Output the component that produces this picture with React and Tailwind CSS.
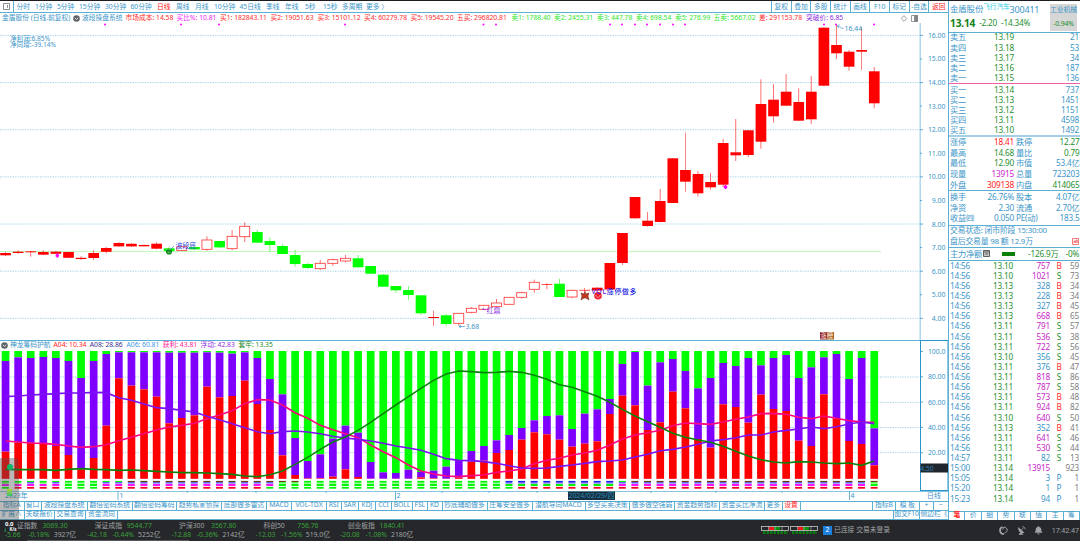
import React from 'react';

const STEP = 12.59;
const barX = (i) => 5.5 + i * STEP;

// kind, high, top, bottom, low (r = solid red, h = hollow red, g = green)
const candles = [
  ['r', 252, 253, 255.3, 256], ['r', 250.3, 251.7, 253, 253.7], ['r', 251, 251.3, 252, 256.7],
  ['r', 250, 252, 254.7, 255], ['r', 250.7, 251.7, 253.8, 254], ['r', 252, 252, 257.8, 258],
  ['r', 256.3, 257.8, 259, 260], ['r', 250, 253, 258, 260], ['r', 247, 248, 251.8, 253.3],
  ['r', 242.3, 243, 246.4, 246.7], ['r', 243, 243.8, 246.4, 247], ['r', 244.5, 245, 246.3, 246.5],
  ['r', 242.3, 243.7, 248.7, 249.3], ['g', 247, 248.3, 251, 252], ['h', 246, 246.7, 250.6, 251],
  ['g', 246.3, 247, 249.4, 250], ['h', 236.3, 240, 249.3, 250.7], ['g', 241, 241, 247.4, 248],
  ['h', 230, 236.3, 248.7, 250.3], ['h', 222.3, 226.3, 236.7, 242], ['g', 230, 232, 242.7, 243],
  ['g', 237.3, 241, 245, 252], ['g', 244, 246, 254, 254], ['g', 250, 255, 264, 266.7],
  ['g', 263, 264, 268, 269], ['h', 260, 263.3, 268.7, 270], ['h', 258.7, 259.7, 263.3, 266],
  ['h', 255, 258.3, 261, 262.3], ['g', 255, 258.3, 267.3, 267.5], ['g', 266, 266, 273.7, 274],
  ['g', 273.7, 274.7, 286.7, 287], ['g', 286, 286, 290.3, 292.7], ['g', 286, 290, 295, 300],
  ['g', 295, 295.3, 313.3, 314.7], ['r', 310.7, 317, 318, 326], ['g', 314, 315.3, 324, 325.7],
  ['h', 313, 313.3, 323.3, 325.7], ['h', 307, 308.3, 312.3, 313.3], ['h', 305, 305.3, 309.3, 310],
  ['h', 299, 303, 306.7, 307.5], ['h', 297, 297.3, 304.3, 305], ['h', 291.7, 292.7, 297.3, 298.7],
  ['h', 279.7, 282.3, 289.3, 292.7], ['h', 283, 284, 285, 289.3], ['g', 278.7, 283.7, 297, 297],
  ['h', 289.7, 290.3, 297, 298.3], ['h', 288, 289.8, 290.8, 293], ['r', 287, 287.7, 290.5, 291],
  ['r', 263, 263, 289.5, 290], ['r', 233, 233, 263, 265], ['r', 197, 197, 218.3, 218.5],
  ['r', 212, 220.7, 226, 226.7], ['r', 189, 201, 222, 222.3], ['r', 158, 158.3, 203, 203],
  ['r', 132.7, 170, 181.7, 191.7], ['r', 171, 174, 193.3, 196.7], ['r', 173, 182, 187.3, 189.7],
  ['r', 139, 143, 184.7, 187], ['r', 119, 152.3, 155.3, 161], ['r', 130, 130.3, 155, 157],
  ['r', 79.3, 104, 141.7, 148.7], ['r', 84.3, 99.7, 116.3, 122.7], ['r', 74, 91.7, 105.7, 106],
  ['r', 88.3, 102, 120.7, 121], ['r', 76, 91.7, 119.3, 124], ['r', 27, 27.7, 85.7, 86],
  ['r', 25, 45, 53.3, 59], ['r', 50, 51.7, 66.7, 70.7], ['r', 27.7, 50, 51.7, 70],
  ['r', 67, 71.3, 103.3, 108.3],
];

// lower pane series are stored in thirds of a pixel from the pane top
const paneY = (v) => v / 3;
const purpleTop = [
  78, 67, 69, 66, 69, 78, 129, 78, 57, 52, 52, 52, 52, 53, 53, 53, 52, 53, 56, 52, 69, 132, 178, 309, 378, 358, 311,
  272, 293, 381, 412, 414, 404, 411, 407, 395, 375, 348, 333, 316, 300, 279, 256, 243, 241, 282, 236, 223, 192, 87,
  51, 152, 82, 72, 108, 160, 129, 84, 93, 69, 91, 69, 60, 129, 97, 67, 57, 132, 69, 280,
];
const redTop = [
  350, 323, 323, 325, 333, 360, 403, 369, 272, 130, 152, 163, 185, 265, 249, 241, 155, 187, 183, 137, 207, 285, 361,
  420, 430, 430, 425, 403, 426, 431, 431, 431, 431, 427, 430, 431, 428, 380, 377, 354, 345, 314, 292, 298, 314, 335,
  326, 319, 237, 182, 211, 285, 262, 170, 220, 312, 338, 208, 216, 263, 179, 222, 228, 317, 333, 178, 250, 318, 327,
  391,
];
const pinkLine = [
  318, 321, 324, 325, 328, 333, 337, 335, 329, 317, 307, 296, 285, 276, 271, 265, 251, 240, 227, 206, 194, 195, 210,
  233, 250, 271, 284, 296, 308, 330, 350, 368, 390, 408, 417, 423, 425, 422, 420, 412, 408, 402, 386, 376, 370, 360,
  354, 346, 330, 312, 300, 293, 286, 272, 264, 266, 268, 261, 253, 246, 236, 235, 238, 247, 251, 243, 250, 257, 261,
  262,
];
const purpleLine = [
  185, 183, 180, 178, 176, 174, 174, 172, 173, 188, 196, 207, 218, 221, 226, 231, 244, 254, 266, 278, 290, 296, 290,
  288, 291, 296, 304, 309, 313, 318, 325, 333, 339, 346, 358, 371, 376, 377, 380, 385, 392, 399, 400, 399, 394, 390,
  385, 380, 378, 375, 366, 358, 347, 343, 336, 328, 318, 314, 308, 300, 300, 291, 286, 282, 276, 281, 275, 267, 261,
  266,
];
const greenLine = [
  403, 404, 404, 404, 406, 403, 401, 403, 404, 406, 405, 407, 409, 411, 413, 413, 414, 416, 418, 423, 425, 419, 408,
  388, 367, 343, 321, 306, 286, 262, 236, 210, 185, 160, 136, 117, 108, 110, 113, 112, 109, 112, 121, 133, 149, 157,
  170, 184, 202, 223, 243, 260, 277, 295, 307, 315, 322, 334, 349, 363, 374, 381, 384, 380, 381, 384, 386, 384, 391,
  378,
];

const G = '#00f500';
const N = '#6b3d10';
const B = '#2020e8';
const M = '#ff10ff';
const R = '#f80020';
const stripeColors = (i) => {
  if (i === 0 || i === 1 || i === 3) return [G, G, M, i === 0 ? G : R];
  if (i === 2 || i === 4) return [G, B, M, R];
  if (i < 8) return [G, G, G, G];
  if (i < 10) return [G, B, M, R];
  if (i < 21) return [N, B, M, R];
  if (i === 21) return [N, B, M, G];
  if (i < 24) return [N, G, G, G];
  if (i < 40) return [G, G, G, G];
  if (i === 40) return [B, B, G, G];
  if (i < 49) return [B, B, G, R];
  if (i === 49) return [G, B, M, R];
  if (i === 69) return [N, G, G, R];
  return [N, B, M, R];
};

const periods = [
  ['分时', 'w-[18.5px]'], ['1分钟', 'w-[22px]'], ['5分钟', 'w-[22px]'], ['15分钟', 'w-[26px]'],
  ['30分钟', 'w-[25.5px]'], ['60分钟', 'w-[26.5px]'], ['日线', 'w-[19px] text-[#ff2020]'], ['周线', 'w-[19px]'],
  ['月线', 'w-[19px]'], ['10分钟', 'w-[25.5px]'], ['45日线', 'w-[26.5px]'], ['季线', 'w-[19px]'],
  ['年线', 'w-[20px]'], ['5秒', 'w-[18px]'], ['15秒', 'w-[19px]'], ['多周期', 'w-[24px]'], ['更多 〉', 'w-[22px]'],
];

const tools = ['复权', '叠加', '多股', '统计', '画线', 'F10', '标记', '-自选', '返回'];

const indicators = [
  ['市场成本: 14.58', 'w-[51px] text-[#ff2a2a]'],
  ['买比%: 10.81', 'w-[43.5px] text-[#f02af0]'],
  ['买1: 182843.11', 'w-[50.5px] text-[#ff2a2a]'],
  ['买2: 19051.63', 'w-[47px] text-[#ff2a2a]'],
  ['买3: 15101.12', 'w-[46.5px] text-[#ff2a2a]'],
  ['买4: 60279.78', 'w-[46.5px] text-[#ff2a2a]'],
  ['买5: 19545.20', 'w-[46.5px] text-[#ff2a2a]'],
  ['五买: 296820.81', 'w-[54.5px] text-[#ff2a2a]'],
  ['卖1: 1788.40', 'w-[42.5px] text-[#2de82d]'],
  ['卖2: 2455.31', 'w-[43px] text-[#2de82d]'],
  ['卖3: 447.78', 'w-[39px] text-[#2de82d]'],
  ['卖4: 698.54', 'w-[39px] text-[#2de82d]'],
  ['卖5: 276.99', 'w-[38.5px] text-[#2de82d]'],
  ['五卖: 5667.02', 'w-[45.5px] text-[#2de82d]'],
  ['差: 291153.78', 'w-[47px] text-[#ff2a2a]'],
  ['突破价: 6.85', 'w-[40px] text-[#8a2be2]'],
];

const lowerIndicators = [
  ['A04: 10.34', 'w-[36.3px] text-[#ff2020]'],
  ['A08: 28.86', 'w-[36.7px] text-[#3a2a90]'],
  ['A06: 60.81', 'w-[36.3px] text-[#3c96e8]'],
  ['获利: 43.81', 'w-[37.7px] text-[#ff2090]'],
  ['浮动: 42.83', 'w-[38px] text-[#8a2be2]'],
  ['套牢: 13.35', 'w-[38px] text-[#1f8a1f]'],
];

const sells = [['卖五', '13.19', '21'], ['卖四', '13.18', '53'], ['卖三', '13.17', '34'], ['卖二', '13.16', '187'], ['卖一', '13.15', '136']];
const buys = [['买一', '13.14', '737'], ['买二', '13.13', '1451'], ['买三', '13.12', '1151'], ['买四', '13.11', '4598'], ['买五', '13.10', '1492']];

const stats = [
  ['涨停', '18.41', 'text-[#ff2020]', '跌停', '12.27', 'text-[#1f9030]'],
  ['最高', '14.68', 'text-[#1f9030]', '量比', '0.79', 'text-[#1f9030]'],
  ['最低', '12.90', 'text-[#1f9030]', '市值', '53.4亿', ''],
  ['现量', '13915', 'text-[#c828c8]', '总量', '723203', ''],
  ['外盘', '309138', 'text-[#ff2020]', '内盘', '414065', 'text-[#1f9030]'],
];
const stats2 = [
  ['换手', '26.76%', '', '股本', '4.07亿', ''],
  ['净资', '2.30', '', '流通', '2.70亿', ''],
  ['收益㈣', '0.050', '', 'PE(动)', '183.5', ''],
];

const ticks = `14:56 13.10 757 B 59
14:56 13.10 1021 S 73
14:56 13.13 328 B 34
14:56 13.13 228 B 34
14:56 13.13 327 B 45
14:56 13.13 668 B 65
14:56 13.11 791 S 57
14:56 13.11 536 S 38
14:56 13.11 722 S 56
14:56 13.10 356 S 45
14:56 13.11 376 B 47
14:56 13.11 818 S 86
14:56 13.11 787 S 58
14:56 13.11 573 B 48
14:56 13.11 924 B 82
14:56 13.10 640 S 50
14:56 13.13 352 B 41
14:56 13.11 641 S 46
14:56 13.11 530 S 44
14:57 13.11 82 S 13
15:00 13.14 13915 - 923
15:05 13.14 3 P 1
15:20 13.14 1 P 1
15:23 13.14 94 P 1`.split('\n').map((line) => line.split(' '));

const sideColor = { B: 'text-[#ff2a2a]', S: 'text-[#1f9030]', P: 'text-[#2f8fc8]' };

const templates = [
  ['指标A', 'w-[24.5px]'], ['窗口', 'w-[17px]'], ['波段操盘系统', 'w-[46.5px]'], ['翻倍密码系统', 'w-[44.5px]'],
  ['翻倍密码筹码', 'w-[44.5px]'], ['趋势私家侦探', 'w-[45px]'], ['底部做多雷达', 'w-[45px]'], ['MACD', 'w-[25px]'],
  ['VOL-TDX', 'w-[35px]'], ['RSI', 'w-[14.5px]'], ['SAR', 'w-[17.5px]'], ['KDJ', 'w-[17px]'], ['CCI', 'w-[16px]'],
  ['BOLL', 'w-[21px]'], ['FSL', 'w-[14.5px]'], ['KD', 'w-[15px]'], ['抄底辅助做多', 'w-[45px]'],
  ['庄筹安全做多', 'w-[45px]'], ['潜航导向MACD', 'w-[53px]'], ['多空买卖决策', 'w-[44.5px]'],
  ['做多做空强弱', 'w-[45px]'], ['资金趋势指标', 'w-[45px]'], ['资金买比净流', 'w-[45px]'], ['更多', 'w-[17.5px]'],
  ['设置', 'w-[18px] text-[#ff2020]'],
];

const indices = [
  ['证指数', '3069.30', '-5.66', '-0.18%', '3927亿'],
  ['深证成指', '9544.77', '-42.18', '-0.44%', '5252亿'],
  ['沪深300', '3567.80', '-12.88', '-0.36%', '2142亿'],
  ['科创50', '756.76', '-12.03', '-1.56%', '519.0亿'],
  ['创业板指', '1840.41', '-20.08', '-1.08%', '2180亿'],
];

const toPoints = (series) => series.map((v, i) => `${barX(i)},${paneY(v)}`).join(' ');

const Candle = ({ data, index }) => {
  const [kind, high, top, bottom, low] = data;
  const x = barX(index);
  const color = kind === 'g' ? '#00ff00' : '#ff0000';
  const thin = bottom - top < 1.5;
  return (
    <g>
      <line x1={x} x2={x} y1={high} y2={low} stroke={color} strokeWidth="0.7" opacity="0.8" />
      {kind === 'h' && !thin ? (
        <rect x={x - 5} y={top} width="10" height={bottom - top} fill="#fff" stroke="#ff3030" strokeWidth="0.8" />
      ) : (
        <rect x={x - 5.3} y={top} width="10.7" height={Math.max(bottom - top, 1)} fill={color} opacity={kind === 'h' ? 0.7 : 1} />
      )}
    </g>
  );
};

const MainChart = () => (
  <svg className="block" width="948" height="317" viewBox="0 23 948 317" fontSize="6.9">
    {[16, 14, 12, 10, 8, 6, 4].map((p) => (
      <line key={p} x1="0" x2="920" y1={35.4 + (16 - p) * 23.58} y2={35.4 + (16 - p) * 23.58} stroke="#8cc6e2" strokeWidth="0.8" strokeDasharray="1.3 1.2" />
    ))}
    <line x1="0" x2="881" y1="251.6" y2="251.6" stroke="#bdf7b4" strokeWidth="1" />
    {candles.map((c, i) => <Candle key={i} data={c} index={i} />)}
    {[105, 181, 219, 345, 483.5, 496, 610, 622, 635, 647, 660, 673, 685, 824, 836, 874].map((x) => (
      <circle key={x} cx={x} cy="24.6" r="1" fill="#ff00ff" />
    ))}
    <path d="M57.3 253.5v4M55.6 255.4h3.4M725.5 185v4M723.8 187h3.4" stroke="#ff00ff" strokeWidth="2" />
    <circle cx="169" cy="251.5" r="3.1" fill="#128a22" />
    <path d="M166 249h6M167.5 252.3h3" stroke="#70e070" strokeWidth="0.8" />
    <path d="M171 249l3-3" stroke="#2f70c8" strokeWidth="0.7" />
    <text x="175.5" y="247.8" fill="#3048e0">波段底</text>
    <path d="M483 309.5h3M484 308l-2 1.5" stroke="#8a2be2" strokeWidth="0.7" />
    <text x="486.5" y="313" fill="#8a2be2">红鼎</text>
    <path d="M581 293l3 1 1-2.5 1 2.5 3-1-1 3 1 4-3-2h-2l-3 2 1-4z" fill="#c03820" stroke="#602010" strokeWidth="0.5" />
    <circle cx="598" cy="295.8" r="3.8" fill="#f02030" />
    <path d="M595.5 295l2.5 3 2.5-3" fill="none" stroke="#ffb0b0" strokeWidth="0.7" />
    <text x="591.5" y="294.3" fill="#1616e0" textLength="45" fontWeight="500">
      <tspan fill="#5a18d8">VOL</tspan>涨停做多
    </text>
    <text x="465.5" y="329" fill="#3c96c8">3.68</text>
    <path d="M465 326.5h-6M461 325l-2 1.5 2 1.5M843.5 28.500c-3 0-3-2.500-6-2.500M839.5 24.5l-2.5 1.5 2 2" fill="none" stroke="#3c96c8" strokeWidth="0.7" />
    <text x="844.5" y="31" fill="#3c96c8">16.44</text>
    <rect x="820" y="332" width="7" height="7.5" fill="#8d1c24" />
    <rect x="827" y="332" width="7" height="7.5" fill="#a8642c" />
    <text x="820.3" y="338.3" fontSize="6.4" fill="#fff0e0">涨榜</text>
    <text x="10" y="40.6" fill="#3c96c8" fontSize="6.6">净利润:6.85%</text>
    <text x="10" y="47.2" fill="#3c96c8" fontSize="6.6">净同增:-39.14%</text>
    <line x1="920.2" x2="920.2" y1="23" y2="340" stroke="#a8d4e8" strokeWidth="1.4" />
    {[16, 15, 14, 13, 12, 11, 10, 9, 8, 7, 6, 5, 4].map((p) => (
      <g key={p}>
        <line x1="920" x2={p % 2 ? 922 : 923} y1={35.4 + (16 - p) * 23.58} y2={35.4 + (16 - p) * 23.58} stroke="#3c96c8" strokeWidth="0.8" />
        <text x="945.5" y={37.9 + (16 - p) * 23.58} textAnchor="end" fill="#3c96c8">{p.toFixed(2)}</text>
      </g>
    ))}
  </svg>
);

const LowerChart = () => (
  <svg className="absolute inset-0" width="948" height="156" viewBox="0 0 948 156" fontSize="6.9">
    {[42, 67.4, 92.5, 117.6].map((y) => (
      <line key={y} x1="0" x2="920" y1={y} y2={y} stroke="#8cc6e2" strokeWidth="0.8" strokeDasharray="1.3 1.2" />
    ))}
    {purpleTop.map((top, i) => {
      const x = barX(i) - 3.8;
      return (
        <g key={i}>
          <rect x={x} y="16" width="7.7" height={paneY(top) - 16} fill="#00ff00" />
          <rect x={x} y={paneY(top)} width="7.7" height={paneY(redTop[i] - top)} fill="#8000ff" />
          <rect x={x} y={paneY(redTop[i])} width="7.7" height={paneY(431.5 - redTop[i])} fill="#ff0000" />
          {stripeColors(i).map((c, k) => (
            <rect key={k} x={x + 0.2} y={[145.9, 147.3, 149, 151.9][k]} width="7" height={[1.1, 1.1, 2, 1.8][k]} fill={c} />
          ))}
        </g>
      );
    })}
    <polyline points={toPoints(pinkLine)} fill="none" stroke="#ff0080" strokeWidth="1.6" />
    <polyline points={toPoints(purpleLine)} fill="none" stroke="#7a10f5" strokeWidth="1.6" />
    <polyline points={toPoints(greenLine)} fill="none" stroke="#0a820a" strokeWidth="1.6" />
    <rect x="920.5" y="5.5" width="27.5" height="150" fill="none" stroke="#2a94cc" strokeWidth="1" />
    {['100.0', '80.00', '60.00', '40.00', '20.00'].map((label, i) => (
      <g key={label}>
        <line x1="920" x2="923" y1={16.5 + i * 25.3} y2={16.5 + i * 25.3} stroke="#3c96c8" strokeWidth="0.8" />
        <text x="945.5" y={19 + i * 25.3} textAnchor="end" fill="#3c96c8">{label}</text>
      </g>
    ))}
    <rect x="920.5" y="128.5" width="27.5" height="9" fill="#20262e" />
    <text x="920.5" y="135.5" fill="#2a80b8" fontSize="6.5">4.50</text>
  </svg>
);

const TimeAxis = () => (
  <svg className="block" width="948" height="10" viewBox="0 491 948 10" fontSize="6.9" fill="#3c96c8">
    <path d="M0 491.3h948M118 491v9M395.5 491v9M849.5 491v9M187 491v2M256 491v2M326 491v2M442 491v2M489 491v2M537 491v2M651 491v2M716 491v2M782 491v2" stroke="#5cb0d4" strokeWidth="0.9" />
    <text x="5" y="498.3">2023年</text>
    <text x="119.5" y="498.3">1</text>
    <text x="396.5" y="498.3">2</text>
    <text x="850.5" y="498.3">4</text>
    <rect x="568" y="491.5" width="47" height="8.5" fill="#16303f" />
    <text x="568.5" y="498.3" fill="#2f86b8" textLength="46">2024/02/29/四</text>
    <text x="927" y="498.3">日线</text>
  </svg>
);

const QuoteRow = ({ row }) => (
  <div className="flex h-[10.15px] items-center whitespace-nowrap">
    <span className="w-[30px]">{row[0]}</span>
    <span className="w-[34px] text-right text-[#1f9030]">{row[1]}</span>
    <span className="flex-1 text-right">{row[2]}</span>
  </div>
);

const StatRow = ({ row }) => (
  <div className="flex h-[10.7px] items-center whitespace-nowrap">
    <span className="w-[26px]">{row[0]}</span>
    <span className={`w-[38px] text-right ${row[2]}`}>{row[1]}</span>
    <span className="ml-[2px]">{row[3]}</span>
    <span className={`flex-1 text-right ${row[5]}`}>{row[4]}</span>
  </div>
);

const QuotePanel = () => (
  <aside className="flex h-[519px] w-[132px] shrink-0 flex-col border-l border-[#5cb0d4] text-[8.2px] leading-none tracking-[-0.2px]">
    <div className="flex h-[31.5px] shrink-0 border-b border-[#5cb0d4] pl-[1px]">
      <div className="flex-1 whitespace-nowrap">
        <div className="flex h-[16px] items-center pt-[1px]">
          <span className="text-[8.5px]">金盾股份</span>
          <span className="mb-[4px] text-[6.8px] text-[#30d0e8]">飞行汽车</span>
          <span className="text-[9px]">300411</span>
        </div>
        <div className="flex items-center gap-[4px] pt-[1px] text-[#1f9030]">
          <b className="text-[10.2px] text-[#128012]">13.14</b>
          <span>-2.20</span>
          <span>-14.34%</span>
        </div>
      </div>
      <div className="mt-[3px] mr-[3px] flex h-[27px] w-[27px] flex-col items-center justify-between bg-[#d6d6d6] pt-[3px] pb-[3px] text-[6.9px] whitespace-nowrap">
        <span>工业机械</span>
        <span className="text-[#1f9030]">-0.94%</span>
      </div>
    </div>
    <div className="shrink-0 pr-[1px] pl-[1px]">{sells.map((r) => <QuoteRow key={r[0]} row={r} />)}</div>
    <div className="h-px shrink-0 bg-[#f060a8]" />
    <div className="h-[52.5px] shrink-0 border-b-2 border-[#a4d0e6] pt-[.5px] pr-[1px] pl-[1px]">{buys.map((r) => <QuoteRow key={r[0]} row={r} />)}</div>
    <div className="h-[54.5px] shrink-0 border-b border-[#5cb0d4] pr-[.5px] pl-[1px]">{stats.map((r) => <StatRow key={r[0]} row={r} />)}</div>
    <div className="h-[34.5px] shrink-0 border-b border-[#5cb0d4] pt-[.5px] pr-[.5px] pl-[1px]">{stats2.map((r) => <StatRow key={r[0]} row={r} />)}</div>
    <div className="h-[22.5px] shrink-0 border-b border-[#5cb0d4] pl-[1px] text-[7.9px] whitespace-nowrap">
      <div className="flex h-[10.7px] items-center">交易状态: 闭市阶段 15:30:00</div>
      <div className="flex h-[10.7px] items-center justify-between pr-px">
        盘后交易量 98 额 12.9万
        <svg width="7" height="7" viewBox="0 0 7 7" fill="none" stroke="#f04040" strokeWidth="0.7">
          <path d="M.5.5h6v6h-6zM2 5V3h1.2V5M4 5V2h1.2V5" />
        </svg>
      </div>
    </div>
    <div className="flex h-[12.5px] shrink-0 items-center border-b border-[#5cb0d4] pr-[1px] pl-[1px] whitespace-nowrap">
      <span>主力净额</span>
      <svg className="ml-[1px]" width="7" height="7" viewBox="0 0 7 7" fill="#c8c8c8" stroke="#505050" strokeWidth="0.9">
        <path d="M.5.5h6v6h-6zM.5 2h6M2 4h3" />
      </svg>
      <span className="ml-[12px] h-[4px] w-[13.5px] bg-[#0a800a]" />
      <span className="ml-auto text-[#1f9030]">-126.9万</span>
      <span className="ml-[7px] text-[#1f9030]">-0%</span>
    </div>
    <div className="shrink-0 pr-[1px] pl-[1px]">
      {ticks.map(([time, price, vol, side, count], i) => (
        <div key={i} className="flex h-[10.14px] items-center">
          <span className="w-[28px]">{time}</span>
          <span className="w-[35px] text-right text-[#1f9030]">{price}</span>
          <span className={`w-[37px] text-right ${Number(vol) > 500 ? 'text-[#c828c8]' : ''}`}>{vol}</span>
          <span className={`ml-[5px] w-[8px] text-center ${sideColor[side]}`}>{side === '-' ? '' : side}</span>
          <span className="flex-1 text-right text-[#808080]">{count}</span>
        </div>
      ))}
    </div>
    <div className="mt-auto flex h-[9.5px] shrink-0 border-t border-[#5cb0d4] text-[6.8px]">
      {['笔', '价', '细', '势', '联', '值', '主', '筹'].map((t, i) => (
        <span key={t} className={`flex flex-1 items-center justify-center border-r border-[#5cb0d4] ${i === 0 ? 'font-bold text-[#ff2020]' : ''}`}>{t}</span>
      ))}
    </div>
  </aside>
);

const MarketMeter = () => (
  <svg width="57" height="9" viewBox="0 0 57 9">
    {[0, 29].map((x) => (
      <g key={x}>
        <rect x={x + 0.5} y="0.5" width="27" height="4" fill="none" stroke="#c8c8c8" strokeWidth="0.8" />
        <rect x={x + 8} y="1" width="5" height="3" fill="#f01818" />
        <rect x={x + 13} y="1" width="6" height="3" fill="#0a900a" />
        <path d={`M${x + 7.5} 0v5M${x + 14} 0v5M${x + 21} 0v5`} stroke="#c8c8c8" strokeWidth="0.6" />
        <path d={`M${x + 2} 6.5h25`} stroke="#0a7a12" strokeWidth="3" strokeDasharray="2.5 1" />
      </g>
    ))}
  </svg>
);

const StatusBar = () => (
  <footer className="flex h-[21px] items-center bg-[#25272a] text-[6.8px] leading-none text-[#a0a4a6]">
    <div className="flex w-[424px] shrink-0 pt-px">
      {indices.map(([name, value, change, pct, volume], i) => (
        <div key={name} className="w-[84.3px] shrink-0 whitespace-nowrap">
          <div className="flex h-[9px] items-center pl-[10.5px]">
            <span className={`w-[29px] ${i === 0 ? 'pl-[6.5px]' : ''}`}>{name}</span>
            <span className="w-[31px] text-center text-[#3aa03a]">{value}</span>
          </div>
          <div className="flex h-[9px] items-center text-center">
            <span className="w-[25.5px] text-[#3aa03a]">{change}</span>
            <span className="w-[27px] text-[#3aa03a]">{pct}</span>
            <span className="w-[25px]">{volume}</span>
          </div>
        </div>
      ))}
    </div>
    <div className="ml-[337px] flex items-center whitespace-nowrap">
      <MarketMeter />
      <span className="ml-[5px] flex h-[9px] w-[9px] items-center justify-center bg-[#1c80dc] text-white">2</span>
      <span className="ml-[2px]">已连接 交易未登录</span>
    </div>
    <div className="ml-auto flex items-center gap-[8.5px]">
      <svg width="9" height="9" viewBox="0 0 9 9" fill="none" stroke="currentColor">
        <path d="M3.6 1C1.600 1.600 1 3 1.100 4.500 1.200 6.500 2.800 8 4.800 8.200" strokeWidth="1.8" />
        <path d="M3.800 3.500l1-2.500M4.800 7.800l1.500-1.500M5 1c2 .2 3.300 1.500 3.200 3.300-.1 1.200-.8 2-1.800 2.200" strokeWidth="1" />
      </svg>
      <svg width="9" height="9" viewBox="0 0 9 9" fill="currentColor">
        <path d="M1.200 1l6.300 5.800C4.500 8 .5 5.500 1.200 1zM3 6.500L1.500 8.700h5L5 7z" />
        <path d="M4.300 4L6.500 2M5.500.7c1.600 0 2.600 1 2.600 2.600" fill="none" stroke="currentColor" strokeWidth="0.9" />
      </svg>
      <svg width="9" height="9" viewBox="0 0 9 9" fill="currentColor">
        <path d="M4.500.3c.5 0 .8.3.8.8C6.800 1.500 7.300 2.600 7.300 4c0 1.300.3 1.900 1.200 2.700H.5C1.400 5.900 1.700 5.300 1.700 4c0-1.400.5-2.500 2-2.900 0-.5.3-.8.8-.8zM3.400 7.400h2.200c0 1.500-2.200 1.500-2.200 0z" />
      </svg>
      <span className="pr-[1px] font-[Roboto] text-[7.1px]">17:42:47</span>
    </div>
  </footer>
);

const RoundMark = () => (
  <svg width="7" height="7" viewBox="0 0 7 7">
    <circle cx="3.5" cy="3.5" r="3.3" fill="#606468" />
    <path d="M1.8 2.8l1.700 1.700 1.700-1.700" fill="none" stroke="#fff" strokeWidth="0.8" />
  </svg>
);

const SpeedWidget = () => (
  <div className="absolute top-[458px] left-0 h-[82px] w-[19px] text-[6px] leading-none font-bold text-white">
    <div className="h-[62px] rounded-tr bg-[#505050]/40 pt-[6px]">
      <div className="mx-auto h-[6px] w-[6px] rounded-full bg-[#10b468]" />
      <div className="mx-auto mt-[19px] h-[7px] w-[5px] bg-gradient-to-b from-[#b0d030] to-[#20c070]" />
    </div>
    <div className="mt-[.5px] pl-[5px]">0.0</div>
    <div className="flex items-center pl-[3px] text-[4.5px]"><span className="mr-[2px] text-[#20c070]">↓</span>K/s</div>
  </div>
);

const App = () => {
  return (
    <div className="relative h-[541px] w-[1080px] overflow-hidden bg-white font-['Noto_Sans','Noto_Sans_CJK_SC',sans-serif] text-[6.75px] leading-none text-[#3c96c8]">
      <div className="h-px bg-[#1e1e20]" />
      <div className="flex">
        <main className="w-[948px] shrink-0">
          <div className="flex h-[12px] items-center border-b border-[#5cb0d4] whitespace-nowrap">
            <div className="flex h-full w-[14px] items-center justify-center border-r border-[#5cb0d4]">
              <svg width="7" height="7" viewBox="0 0 7 7" fill="none" stroke="#707478" strokeWidth="0.8">
                <path d="M.5.5h6v6h-6zM4.5 2v3" />
              </svg>
            </div>
            <div className="flex pt-px pl-[2.5px]">
              {periods.map(([label, cls]) => <span key={label} className={`shrink-0 ${cls}`}>{label}</span>)}
            </div>
            <div className="ml-auto flex h-full w-[177px]">
              {tools.map((t) => (
                <span key={t} className={`flex flex-1 items-center justify-center border-l border-[#5cb0d4] pt-px ${t === '返回' ? 'text-[#ff2020]' : ''}`}>{t}</span>
              ))}
            </div>
          </div>
          <div className="flex h-[10px] items-center pl-[2px] whitespace-nowrap">
            <span className="w-[71px]">金盾股份 (日线.前复权)</span>
            <RoundMark />
            <span className="ml-[2px] w-[43.5px]">波段操盘系统</span>
            {indicators.map(([label, cls]) => <span key={label} className={`shrink-0 ${cls}`}>{label}</span>)}
            <svg className="mr-[30px] ml-auto shrink-0" width="17" height="7" viewBox="0 0 17 7" fill="none" stroke="#808488" strokeWidth="0.8">
              <path d="M3 .7l2.800 2.800L3 6.300.2 3.500zM10.500.5h6v6h-6z" />
              <path d="M13.500.5h3v6h-3z" fill="#808488" />
            </svg>
          </div>
          <MainChart />
          <section className="relative h-[151px] border-t border-[#5cb0d4]">
            <div className="flex h-[9px] items-center pl-[1px] whitespace-nowrap">
              <RoundMark />
              <span className="ml-[2px] w-[43.5px]">神龙筹码护航</span>
              {lowerIndicators.map(([label, cls]) => <span key={label} className={`shrink-0 ${cls}`}>{label}</span>)}
            </div>
            <div className="absolute -top-[6px] left-0 h-[156px] w-[948px]"><LowerChart /></div>
          </section>
          <TimeAxis />
          <div className="flex h-[9.5px] border-y border-[#5cb0d4] whitespace-nowrap">
            {templates.map(([label, cls]) => (
              <span key={label} className={`flex shrink-0 items-center justify-center border-r border-[#5cb0d4] ${cls}`}>{label}</span>
            ))}
            <span className="ml-auto flex w-[24px] items-center justify-center border-x border-[#5cb0d4]">指标B</span>
            <span className="flex w-[24px] items-center justify-center border-r border-[#5cb0d4]">模 板</span>
            <span className="flex w-[14px] items-center justify-center border-r border-[#5cb0d4]">+</span>
            <span className="flex w-[14px] items-center justify-center">−</span>
          </div>
          <div className="flex h-[9.5px] border-b border-[#5cb0d4] whitespace-nowrap">
            <span className="flex w-[24.5px] items-center justify-center border-r border-[#5cb0d4]">扩展∧</span>
            <span className="flex w-[30.5px] items-center justify-center border-r border-[#5cb0d4]">关联报价</span>
            <span className="flex w-[31px] items-center justify-center border-r border-[#5cb0d4]">交易查询</span>
            <span className="flex w-[32px] items-center justify-center border-r border-[#5cb0d4]">资金流向</span>
            <span className="ml-auto flex w-[27px] items-center justify-center border-x border-[#5cb0d4]">图文F10</span>
            <span className="flex w-[28px] items-center justify-center">侧边栏《</span>
          </div>
        </main>
        <QuotePanel />
      </div>
      <StatusBar />
      <SpeedWidget />
      <div className="absolute bottom-0 left-[27px] h-px w-[162px] bg-[#55585b]" />
    </div>
  );
};

export default App;
